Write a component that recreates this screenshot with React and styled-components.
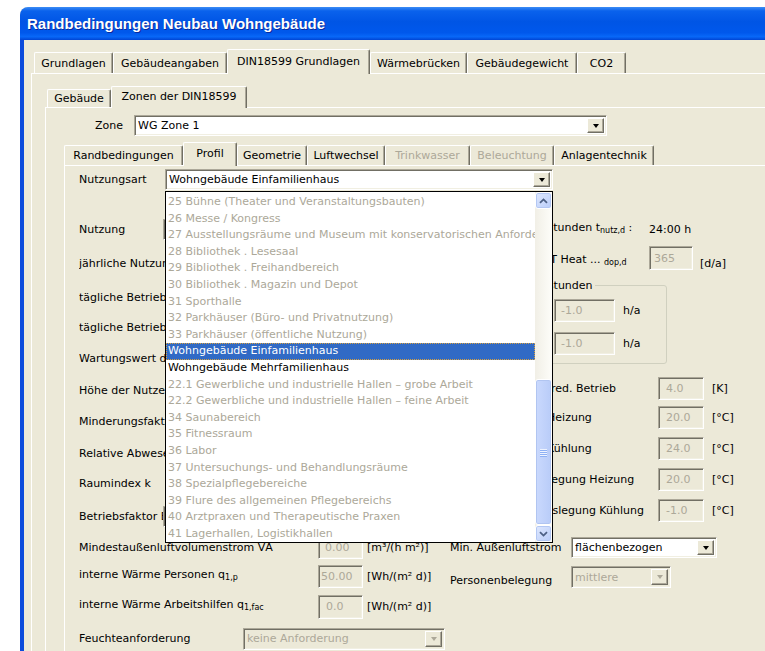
import React from "react";
import styled, { createGlobalStyle, css } from "styled-components";

const face = "#ECE9D8";
const shade = "#ACA899";
const dark = "#716F64";
const greyText = "#ACA899";

const GlobalStyle = createGlobalStyle`
  html, body {
    margin: 0;
    padding: 0;
    background: #fff;
  }
  body {
    font-family: "DejaVu Sans", "Liberation Sans", sans-serif;
    font-size: 11px;
    color: #000;
  }
`;

const Page = styled.div`
  width: 765px;
  height: 651px;
  overflow: hidden;
  padding: 7px 0 0 20px;
  box-sizing: border-box;
`;

const Window = styled.div`
  width: 790px;
  height: 660px;
  display: flex;
  flex-direction: column;
  border-top-left-radius: 8px;
  overflow: hidden;
  background: ${face};
`;

const TitleBar = styled.div`
  height: 33px;
  flex-shrink: 0;
  display: flex;
  align-items: center;
  padding-left: 7px;
  background: linear-gradient(
    to bottom,
    #3d8df5 0%,
    #0a62ec 12%,
    #0055e5 45%,
    #0058ec 78%,
    #0868f8 90%,
    #0044d4 100%
  );
  color: #fff;
  font: bold 15px "Liberation Sans", Arial, sans-serif;
  text-shadow: 1px 1px 0 #0c2a9c;
`;

const Frame = styled.div`
  flex: 1;
  display: flex;
  flex-direction: column;
  border-left: 4px solid #0b4bdc;
  padding: 9px 0 0 7px;
`;

const TabStrip = styled.div`
  display: flex;
  align-items: flex-end;
  height: ${(p) => p.$h}px;
  padding-left: ${(p) => p.$inset || 0}px;
  position: relative;
  z-index: 1;
  flex-shrink: 0;
`;

const Tab = styled.div`
  width: ${(p) => p.$w}px;
  height: ${(p) => (p.$active ? "calc(100% + 1px)" : "calc(100% - 3px)")};
  margin-bottom: ${(p) => (p.$active ? -1 : 0)}px;
  padding-bottom: ${(p) => (p.$active ? 2 : 0)}px;
  box-sizing: border-box;
  display: flex;
  align-items: center;
  justify-content: center;
  background: ${face};
  border-top: 1px solid #fff;
  border-left: 1px solid #fff;
  border-right: 1px solid ${dark};
  box-shadow: inset -1px 0 0 ${shade};
  border-radius: 2px 2px 0 0;
  color: ${(p) => (p.$disabled ? greyText : "#000")};
  white-space: nowrap;
`;

const Panel = styled.div`
  flex: 1;
  display: flex;
  flex-direction: column;
  border-top: 1px solid #fff;
  border-left: 1px solid #fff;
  padding: ${(p) => p.$pad};
`;

const ZoneRow = styled.div`
  display: flex;
  align-items: center;
  padding-left: 49px;
`;

const Section = styled.div`
  flex: 1;
  display: flex;
  flex-direction: column;
  margin: 6px 0 0 18px;
`;

const sunken = css`
  box-sizing: border-box;
  border: 1px solid;
  border-color: ${shade} #fff #fff ${shade};
  box-shadow: inset 1px 1px 0 ${dark}, inset -1px -1px 0 #f1efe2;
`;

const Combo = styled.div`
  ${sunken}
  width: ${(p) => p.$w}px;
  height: ${(p) => p.$h || 21}px;
  flex-shrink: 0;
  display: flex;
  align-items: center;
  padding: 2px;
  background: ${(p) => (p.$disabled ? face : "#fff")};
  color: ${(p) => (p.$disabled ? greyText : "#000")};
`;

const ComboText = styled.span`
  flex: 1;
  padding-left: 1px;
  white-space: nowrap;
  overflow: hidden;
`;

const DropButton = styled.span`
  width: 17px;
  align-self: stretch;
  box-sizing: border-box;
  background: ${face};
  border: 1px solid;
  border-color: #fff ${dark} ${dark} #fff;
  box-shadow: inset -1px -1px 0 ${shade};
  display: flex;
  align-items: center;
  justify-content: center;

  &::after {
    content: "";
    border-left: 3.5px solid transparent;
    border-right: 3.5px solid transparent;
    border-top: 4px solid ${(p) => (p.$disabled ? greyText : "#000")};
  }
`;

const Field = styled.div`
  ${sunken}
  width: ${(p) => p.$w}px;
  height: ${(p) => p.$h || 23}px;
  flex-shrink: 0;
  display: flex;
  align-items: center;
  padding-left: ${(p) => p.$pad ?? 6}px;
  background: ${face};
  color: ${greyText};
  white-space: nowrap;
  overflow: hidden;
`;

const Label = styled.span`
  width: ${(p) => p.$w}px;
  flex-shrink: 0;
  white-space: nowrap;
  overflow: hidden;
  line-height: 14px;
`;

const Unit = styled.span`
  margin-left: ${(p) => p.$gap ?? 4}px;
  white-space: nowrap;
`;

const Sub = styled.span`
  font-size: 8px;
  vertical-align: -2px;
`;

const FormRow = styled.div`
  display: flex;
  align-items: ${(p) => p.$align || "center"};
  height: ${(p) => p.$h || 23}px;
  margin-top: ${(p) => p.$mt || 0}px;
  flex-shrink: 0;
`;

const NutzRow = styled(FormRow)`
  padding-left: 14px;
  height: 21px;
`;

const Columns = styled.div`
  display: flex;
`;

const LeftCol = styled.div`
  width: 385px;
  flex-shrink: 0;
  box-sizing: border-box;
  padding-left: 14px;
  display: flex;
  flex-direction: column;
`;

const RightCol = styled.div`
  flex: 1;
  display: flex;
  flex-direction: column;
`;

const GroupBox = styled.fieldset`
  margin: 9px 0 0 10px;
  width: 207px;
  box-sizing: border-box;
  padding: 7px 0 8px 0;
  border: 1px solid #d0d0bf;
  border-radius: 3px;
  display: flex;
  flex-direction: column;
  gap: 10px;
`;

const GroupTitle = styled.legend`
  margin-left: 6px;
  padding: 0 2px;
  line-height: 13px;
`;

/* popup list of the Nutzungsart combo */
const ComboAnchor = styled.div`
  position: relative;
  z-index: 5;
`;

const DropList = styled.div`
  position: absolute;
  top: 100%;
  left: 0;
  margin-top: 1px;
  width: 388px;
  height: 352px;
  box-sizing: border-box;
  border: 1px solid #000;
  background: #fff;
  display: flex;
`;

const Items = styled.div`
  flex: 1;
  min-width: 0;
  padding-top: 2px;
  overflow: hidden;
`;

const Item = styled.div`
  height: 16.6px;
  line-height: 16.6px;
  padding-left: 2px;
  white-space: nowrap;
  overflow: hidden;
  color: ${(p) => (p.$tone === "sel" ? "#fff" : p.$tone === "on" ? "#000" : greyText)};
  background: ${(p) => (p.$tone === "sel" ? "#316ac5" : "transparent")};
  outline: ${(p) => (p.$tone === "sel" ? "1px dotted #d7a040" : "none")};
  outline-offset: -1px;
`;

const ScrollBar = styled.div`
  width: 17px;
  flex-shrink: 0;
  display: flex;
  flex-direction: column;
  background: linear-gradient(to right, #f1efe6, #fdfdf9);
`;

const ScrollButton = styled.div`
  height: 17px;
  flex-shrink: 0;
  box-sizing: border-box;
  border: 1px solid #fff;
  border-radius: 3px;
  background: linear-gradient(to bottom right, #dfe8fe, #b9cdf9);
  box-shadow: inset 0 0 0 1px #b3c7f3;
  display: flex;
  align-items: center;
  justify-content: center;
`;

const Track = styled.div`
  flex: 1;
  display: flex;
  flex-direction: column;
  justify-content: flex-end;
`;

const Thumb = styled.div`
  height: ${(p) => p.$size}px;
  box-sizing: border-box;
  border: 1px solid #fff;
  border-radius: 3px;
  background: linear-gradient(to right, #cad9fd, #b9ccf8);
  box-shadow: inset 0 0 0 1px #b1c5f1;
  display: flex;
  flex-direction: column;
  align-items: center;
  justify-content: center;
  gap: 1px;
`;

const Grip = styled.span`
  width: 7px;
  height: 1px;
  background: #eef3ff;
  box-shadow: 0 1px 0 #8fb1f4;
`;

const Chevron = ({ down }) => (
  <svg width="9" height="6" viewBox="0 0 9 6">
    <path
      d={down ? "M1 1.2 L4.5 4.6 L8 1.2" : "M1 4.8 L4.5 1.4 L8 4.8"}
      fill="none"
      stroke="#4d6185"
      strokeWidth="1.8"
    />
  </svg>
);

const mainTabs = [
  { label: "Grundlagen", w: 79 },
  { label: "Gebäudeangaben", w: 114 },
  { label: "DIN18599 Grundlagen", w: 143, active: true },
  { label: "Wärmebrücken", w: 97 },
  { label: "Gebäudegewicht", w: 110 },
  { label: "CO2", w: 49 },
];

const zoneTabs = [
  { label: "Gebäude", w: 64 },
  { label: "Zonen der DIN18599", w: 136, active: true },
];

const profileTabs = [
  { label: "Randbedingungen", w: 119 },
  { label: "Profil", w: 54, active: true },
  { label: "Geometrie", w: 70 },
  { label: "Luftwechsel", w: 78 },
  { label: "Trinkwasser", w: 85, disabled: true },
  { label: "Beleuchtung", w: 84, disabled: true },
  { label: "Anlagentechnik", w: 100 },
];

const usages = [
  "25 Bühne (Theater und Veranstaltungsbauten)",
  "26 Messe / Kongress",
  "27 Ausstellungsräume und Museum mit konservatorischen Anforderungen",
  "28 Bibliothek . Lesesaal",
  "29 Bibliothek . Freihandbereich",
  "30 Bibliothek . Magazin und Depot",
  "31 Sporthalle",
  "32 Parkhäuser (Büro- und Privatnutzung)",
  "33 Parkhäuser (öffentliche Nutzung)",
  { text: "Wohngebäude Einfamilienhaus", tone: "sel" },
  { text: "Wohngebäude Mehrfamilienhaus", tone: "on" },
  "22.1 Gewerbliche und industrielle Hallen – grobe Arbeit",
  "22.2 Gewerbliche und industrielle Hallen – feine Arbeit",
  "34 Saunabereich",
  "35 Fitnessraum",
  "36 Labor",
  "37 Untersuchungs- und Behandlungsräume",
  "38 Spezialpflegebereiche",
  "39 Flure des allgemeinen Pflegebereichs",
  "40 Arztpraxen und Therapeutische Praxen",
  "41 Lagerhallen, Logistikhallen",
];

const renderTabs = (tabs) =>
  tabs.map((t) => (
    <Tab key={t.label} $w={t.w} $active={t.active} $disabled={t.disabled}>
      {t.label}
    </Tab>
  ));

const ComboBox = ({ w, h, value, disabled }) => (
  <Combo $w={w} $h={h} $disabled={disabled}>
    <ComboText>{value}</ComboText>
    <DropButton $disabled={disabled} />
  </Combo>
);

const UsageList = () => (
  <DropList>
    <Items>
      {usages.map((u) => {
        const item = typeof u === "string" ? { text: u, tone: "off" } : u;
        return (
          <Item key={item.text} $tone={item.tone}>
            {item.text}
          </Item>
        );
      })}
    </Items>
    <ScrollBar>
      <ScrollButton>
        <Chevron />
      </ScrollButton>
      <Track>
        <Thumb $size={146}>
          <Grip />
          <Grip />
          <Grip />
          <Grip />
        </Thumb>
      </Track>
      <ScrollButton>
        <Chevron down />
      </ScrollButton>
    </ScrollBar>
  </DropList>
);

// labels of the upper rows run on under the open list, their fields sit at x 318
const LeftColumn = () => (
  <LeftCol>
    <FormRow $mt={28}>
      <Label $w={84}>Nutzung</Label>
      <ComboBox w={280} />
    </FormRow>
    <FormRow $mt={11}>
      <Label $w={239}>jährliche Nutzungstage</Label>
      <Field $w={45} />
      <Unit>[d/a]</Unit>
    </FormRow>
    <FormRow $mt={11}>
      <Label $w={239}>tägliche Betriebsstunden RLT</Label>
      <Field $w={45} />
      <Unit>[h/d]</Unit>
    </FormRow>
    <FormRow $mt={7}>
      <Label $w={239}>tägliche Betriebsstunden Kühlung</Label>
      <Field $w={45} />
      <Unit>[h/d]</Unit>
    </FormRow>
    <FormRow $mt={8}>
      <Label $w={239}>Wartungswert der Beleuchtungsstärke</Label>
      <Field $w={45} />
      <Unit>[lx]</Unit>
    </FormRow>
    <FormRow $mt={9}>
      <Label $w={239}>Höhe der Nutzebene</Label>
      <Field $w={45} />
      <Unit>[m]</Unit>
    </FormRow>
    <FormRow $mt={8}>
      <Label $w={239}>Minderungsfaktor Bereich Sehaufgabe</Label>
      <Field $w={45} />
      <Unit>[-]</Unit>
    </FormRow>
    <FormRow $mt={9}>
      <Label $w={239}>Relative Abwesenheit</Label>
      <Field $w={45} />
      <Unit>[-]</Unit>
    </FormRow>
    <FormRow $mt={7}>
      <Label $w={239}>Raumindex k</Label>
      <Field $w={45} />
      <Unit>[-]</Unit>
    </FormRow>
    <FormRow $mt={10}>
      <Label $w={84}>Betriebsfaktor Beleuchtung</Label>
      <ComboBox w={200} />
    </FormRow>
    <FormRow $mt={8}>
      <Label $w={239}>Mindestaußenluftvolumenstrom V̇A</Label>
      <Field $w={45}>0.00</Field>
      <Unit>[m³/(h m²)]</Unit>
    </FormRow>
    <FormRow $mt={6}>
      <Label $w={239}>
        interne Wärme Personen q<Sub>1,p</Sub>
      </Label>
      <Field $w={45} $pad={2}>
        50.00
      </Field>
      <Unit>[Wh/(m² d)]</Unit>
    </FormRow>
    <FormRow $mt={7}>
      <Label $w={239}>
        interne Wärme Arbeitshilfen q<Sub>1,fac</Sub>
      </Label>
      <Field $w={45} $pad={7} $h={24}>
        0.0
      </Field>
      <Unit>[Wh/(m² d)]</Unit>
    </FormRow>
    <FormRow $mt={9}>
      <Label $w={164}>Feuchteanforderung</Label>
      <ComboBox w={202} h={22} value="keine Anforderung" disabled />
    </FormRow>
  </LeftCol>
);

const RightColumn = () => (
  <RightCol>
    <FormRow $mt={28}>
      <Label $w={199}>
        Mittlere Nutzungsstunden t<Sub>nutz,d</Sub> :
      </Label>
      <span>24:00 h</span>
    </FormRow>
    <FormRow $mt={5} $h={24} $align="flex-end">
      <Label $w={199}>
        Betriebstage d. RLT Heat ... <Sub>dop,d</Sub>
      </Label>
      <Field $w={44} $h={24} $pad={4}>
        365
      </Field>
      <Unit $gap={7}>[d/a]</Unit>
    </FormRow>
    <GroupBox>
      <GroupTitle>Jahresbetriebsstunden</GroupTitle>
      <FormRow>
        <Label $w={93}>Tag</Label>
        <Field $w={61}>-1.0</Field>
        <Unit $gap={8}>h/a</Unit>
      </FormRow>
      <FormRow>
        <Label $w={93}>Nacht</Label>
        <Field $w={61}>-1.0</Field>
        <Unit $gap={8}>h/a</Unit>
      </FormRow>
    </GroupBox>
    <FormRow $mt={13}>
      <Label $w={208}>Temp.-Absenkung red. Betrieb</Label>
      <Field $w={46} $pad={7}>
        4.0
      </Field>
      <Unit $gap={8}>[K]</Unit>
    </FormRow>
    <FormRow $mt={6}>
      <Label $w={208}>Innentemperatur Heizung</Label>
      <Field $w={46} $pad={7}>
        20.0
      </Field>
      <Unit $gap={8}>[°C]</Unit>
    </FormRow>
    <FormRow $mt={8}>
      <Label $w={208}>Innentemperatur Kühlung</Label>
      <Field $w={46} $pad={7}>
        24.0
      </Field>
      <Unit $gap={8}>[°C]</Unit>
    </FormRow>
    <FormRow $mt={8}>
      <Label $w={208}>Temperatur Teilbelegung Heizung</Label>
      <Field $w={46} $pad={7}>
        20.0
      </Field>
      <Unit $gap={8}>[°C]</Unit>
    </FormRow>
    <FormRow $mt={8}>
      <Label $w={208}>Raumtemp. bei Auslegung Kühlung</Label>
      <Field $w={46} $pad={7}>
        -1.0
      </Field>
      <Unit $gap={8}>[°C]</Unit>
    </FormRow>
    <FormRow $mt={15} $h={21}>
      <Label $w={121}>Min. Außenluftstrom</Label>
      <ComboBox w={146} value="flächenbezogen" />
    </FormRow>
    <FormRow $mt={8} $h={22} $align="flex-end">
      <Label $w={121}>Personenbelegung</Label>
      <ComboBox w={100} h={22} value="mittlere" disabled />
    </FormRow>
  </RightCol>
);

export default function App() {
  return (
    <>
      <GlobalStyle />
      <Page>
        <Window>
          <TitleBar>Randbedingungen Neubau Wohngebäude</TitleBar>
          <Frame>
            <TabStrip $h={24} $inset={3}>
              {renderTabs(mainTabs)}
            </TabStrip>
            <Panel $pad="12px 0 0 13px">
              <TabStrip $h={21} $inset={2}>
                {renderTabs(zoneTabs)}
              </TabStrip>
              <Panel $pad="7px 0 0 0">
                <ZoneRow>
                  <Label $w={39}>Zone</Label>
                  <ComboBox w={473} value="WG Zone 1" />
                </ZoneRow>
                <Section>
                  <TabStrip $h={23}>{renderTabs(profileTabs)}</TabStrip>
                  <Panel $pad="3px 0 0 0">
                    <NutzRow>
                      <Label $w={86}>Nutzungsart</Label>
                      <ComboAnchor>
                        <ComboBox w={388} value="Wohngebäude Einfamilienhaus" />
                        <UsageList />
                      </ComboAnchor>
                    </NutzRow>
                    <Columns>
                      <LeftColumn />
                      <RightColumn />
                    </Columns>
                  </Panel>
                </Section>
              </Panel>
            </Panel>
          </Frame>
        </Window>
      </Page>
    </>
  );
}
